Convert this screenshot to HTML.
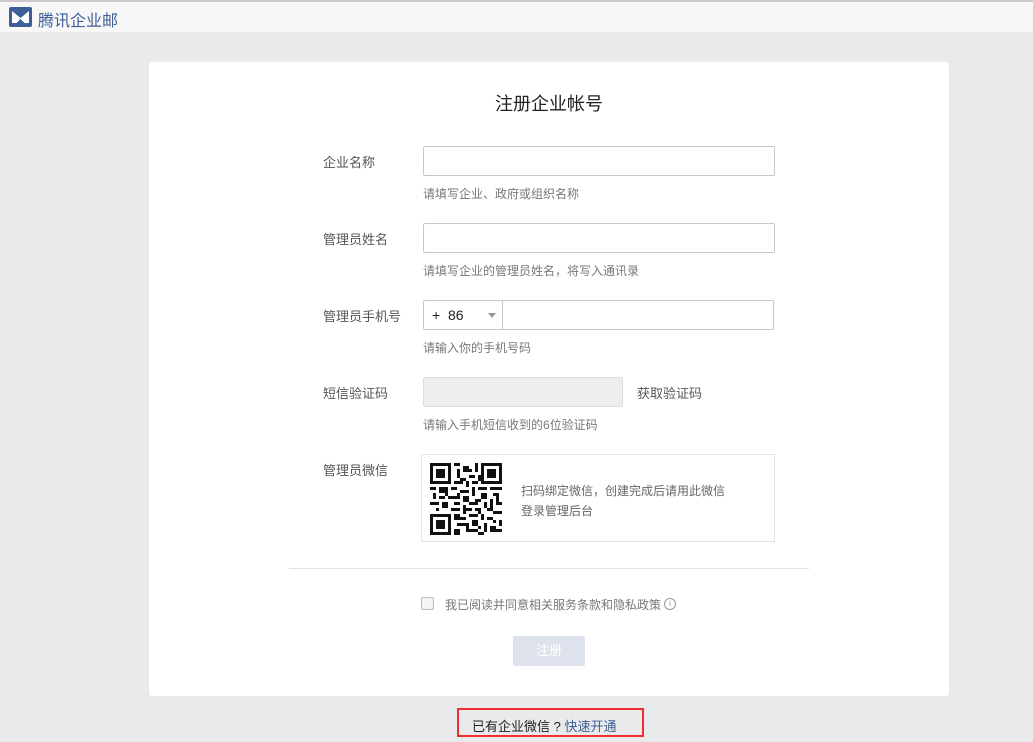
<!DOCTYPE html>
<html><head><meta charset="utf-8"><style>
*{margin:0;padding:0;box-sizing:border-box}
body{width:1033px;height:742px;background:#e9eaec;font-family:"Liberation Sans","Noto Sans CJK SC",sans-serif;position:relative;overflow:hidden;font-size:13px;color:#555}
.hd{position:absolute;left:0;top:0;width:1033px;height:32px;background:#f7f7f7;border-top:2px solid #c9c9c9}
.logo{position:absolute;left:9px;top:5px}
.brand{position:absolute;left:38px;top:5px;font-size:16px;color:#3d5f97}
.card{position:absolute;left:149px;top:62px;width:800px;height:634px;background:#fff;border-radius:3px}
.t{position:absolute;top:28px;width:100%;text-align:center;font-size:18px;color:#222}
.lb{position:absolute;left:174px;font-size:13px;color:#555}
.in{position:absolute;left:274px;width:352px;height:30px;border:1px solid #c8c8c8;border-radius:2px;background:#fff}
.hint{position:absolute;left:274px;font-size:12px;color:#777}
.hr{position:absolute;left:140px;top:506px;width:520px;border-top:1px solid #e2e2e2}
</style></head><body>
<div class="hd">
<svg class="logo" width="23" height="20" viewBox="0 0 23 20"><rect x="0" y="0" width="23" height="20" rx="2" fill="#3d5f97"/><path d="M3 4 L11.5 11 L20 4 L20 16 L15.5 16 L11.5 12 L7.5 16 L3 16Z" fill="#fff"/></svg>
<div class="brand">腾讯企业邮</div>
</div>
<div class="card">
<div class="t">注册企业帐号</div>
<div class="lb" style="top:90px">企业名称</div>
<div class="in" style="top:84px;width:352px"></div>
<div class="hint" style="top:123px">请填写企业、政府或组织名称</div>
<div class="lb" style="top:167px">管理员姓名</div>
<div class="in" style="top:161px"></div>
<div class="hint" style="top:200px">请填写企业的管理员姓名，将写入通讯录</div>
<div class="lb" style="top:244px">管理员手机号</div>
<div class="in" style="top:238px;width:351px"><div style="position:absolute;left:0;top:0;width:79px;height:28px;border-right:1px solid #c8c8c8;font-size:14px;color:#222;padding:6px 0 0 8px">+&nbsp; 86</div><div style="position:absolute;left:64px;top:12px;border:4px solid transparent;border-top:5px solid #999"></div></div>
<div class="hint" style="top:277px">请输入你的手机号码</div>
<div class="lb" style="top:321px">短信验证码</div>
<div class="in" style="top:315px;width:200px;background:#eeeeef;border-color:#ddd"></div>
<div style="position:absolute;left:488px;top:321px;font-size:13px;color:#555">获取验证码</div>
<div class="hint" style="top:354px">请输入手机短信收到的6位验证码</div>
<div class="lb" style="top:398px">管理员微信</div>
<div style="position:absolute;left:272px;top:392px;width:354px;height:88px;border:1px solid #e2e2e2">
<svg style="position:absolute;left:8px;top:8px" width="72" height="72" viewBox="0 0 24 24" shape-rendering="crispEdges">
<rect width="24" height="24" fill="#fff"/>
<g fill="#111"><path d="M0 0h7v7h-7zM17 0h7v7h-7zM0 17h7v7h-7z"/></g>
<g fill="#fff"><path d="M1 1h5v5h-5zM18 1h5v5h-5zM1 18h5v5h-5z"/></g>
<g fill="#111"><path d="M2 2h3v3h-3zM19 2h3v3h-3zM2 19h3v3h-3z"/>
<path d="M8 0h2v1h-2zM11 1h2v2h-2zM9 3h1v2h-1zM13 4h2v1h-2zM15 0h1v3h-1zM8 6h3v1h-3zM12 6h1v2h-1zM14 6h2v1h-2zM0 8h2v1h-2zM3 8h3v2h-3zM7 8h2v1h-2zM10 9h3v1h-3zM14 8h1v3h-1zM16 8h3v1h-3zM20 8h4v1h-4zM1 10h1v2h-1zM6 11h3v1h-3zM11 11h2v2h-2zM17 10h2v2h-2zM21 10h2v1h-2zM0 13h3v1h-3zM4 13h2v2h-2zM8 13h2v1h-2zM13 13h3v1h-3zM18 13h1v2h-1zM20 12h1v3h-1zM22 13h2v1h-2zM2 15h1v1h-1zM7 15h3v1h-3zM11 14h1v3h-1zM15 15h2v1h-2zM21 16h3v1h-3zM8 17h2v2h-2zM13 17h3v1h-3zM17 17h1v2h-1zM19 18h2v1h-2zM9 20h3v1h-3zM14 19h2v2h-2zM18 20h1v3h-1zM20 21h2v2h-2zM8 22h2v2h-2zM12 22h4v1h-4zM16 23h2v1h-2zM23 19h1v2h-1zM9 2h1v1h-1zM13 2h1v1h-1zM10 5h2v1h-2zM16 4h1v2h-1zM5 10h1v1h-1zM9 10h1v2h-1zM15 12h2v1h-2zM3 11h2v1h-2zM22 11h1v2h-1zM12 15h2v1h-2zM16 16h1v1h-1zM19 15h2v1h-2zM10 18h2v1h-2zM21 19h1v1h-1zM12 20h1v2h-1zM16 21h1v1h-1zM22 22h2v1h-2z"/></g>
</svg>
<div style="position:absolute;left:99px;top:26px;font-size:12px;color:#666;line-height:20px">扫码绑定微信，创建完成后请用此微信<br>登录管理后台</div>
</div>
<div class="hr"></div>
<div style="position:absolute;left:272px;top:535px;width:13px;height:13px;border:1px solid #bbb;border-radius:2px;background:#f4f4f4"></div>
<div style="position:absolute;left:296px;top:534px;font-size:12px;color:#777">我已阅读并同意相关服务条款和隐私政策</div>
<div style="position:absolute;left:515px;top:536px;width:12px;height:12px;border:1px solid #999;border-radius:50%;font-size:8px;line-height:10px;text-align:center;color:#888">i</div>
<div style="position:absolute;left:364px;top:574px;width:72px;height:30px;background:#dde2ec;border-radius:2px;color:#fff;font-size:13px;text-align:center;line-height:30px">注册</div>
</div>
<div style="position:absolute;left:457px;top:708px;width:187px;height:29px;border:2px solid #f03030"></div>
<div style="position:absolute;left:472px;top:716px;font-size:13px;color:#222">已有企业微信 ? <span style="color:#3d5f97">快速开通</span></div>
</body></html>
